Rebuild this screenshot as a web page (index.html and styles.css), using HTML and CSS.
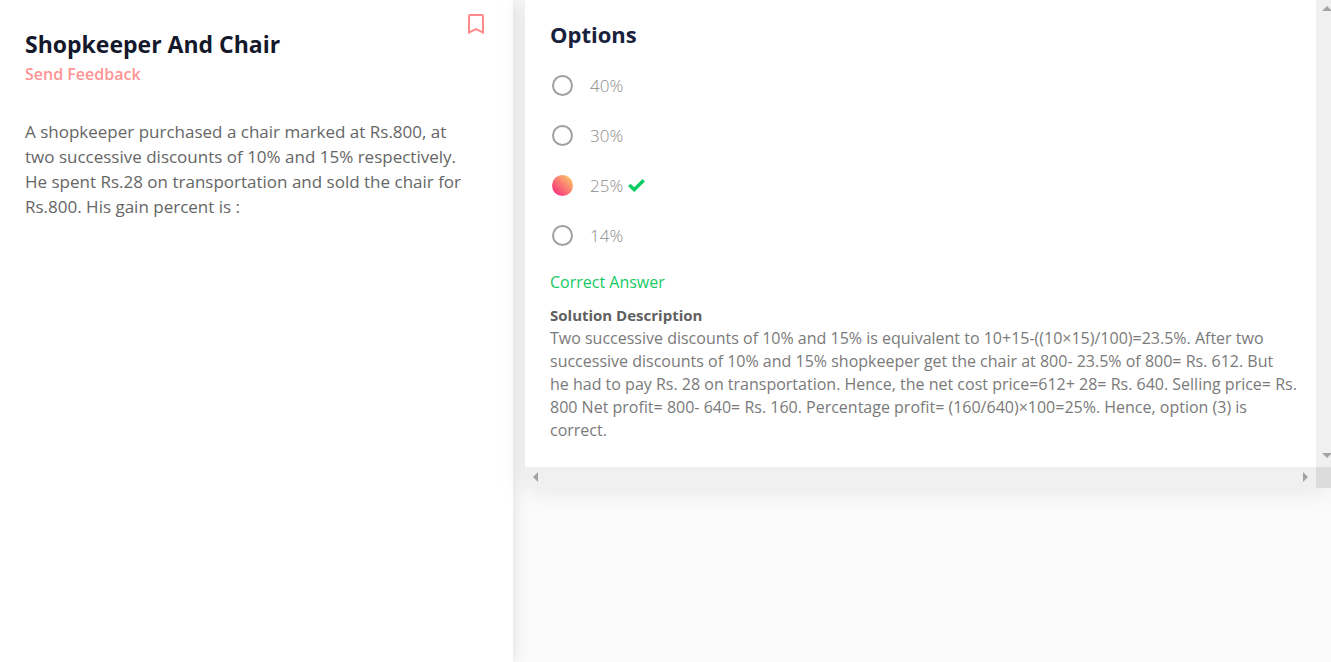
FILE: index.html
```html
<!DOCTYPE html>
<html lang="en">
<head>
<meta charset="utf-8">
<title>Shopkeeper And Chair</title>
<link rel="stylesheet" href="styles.css">
</head>
<body>
<main class="layout">
  <section class="problem">
    <header class="problem-head">
      <div>
        <h1 class="title">Shopkeeper And Chair</h1>
        <a class="feedback" href="#feedback">Send Feedback</a>
      </div>
      <button class="bookmark" type="button" aria-label="Bookmark">
        <svg width="16" height="20" viewBox="0 0 16 20" fill="none" stroke="currentColor" stroke-width="2"><path d="M1 18.5V2Q1 1 2 1H14Q15 1 15 2V18.5L8 15Z"/></svg>
      </button>
    </header>
    <p class="question">A shopkeeper purchased a chair marked at Rs.800, at<br>two successive discounts of 10% and 15% respectively.<br>He spent Rs.28 on transportation and sold the chair for<br>Rs.800. His gain percent is :</p>
  </section>
  <section class="answer">
    <div class="answer-body">
      <h2 class="heading">Options</h2>
      <form class="options">
        <label class="option"><input class="radio" type="radio" name="option"><span>40%</span></label>
        <label class="option"><input class="radio" type="radio" name="option"><span>30%</span></label>
        <label class="option"><input class="radio" type="radio" name="option" checked><span>25%</span>
          <svg class="tick" width="17" height="13" viewBox="0 0 17 13" fill="none" stroke="currentColor" stroke-width="3.4"><path d="M1.3 6L6.2 10.6L15.7 1.3"/></svg></label>
        <label class="option"><input class="radio" type="radio" name="option"><span>14%</span></label>
      </form>
      <p class="result">Correct Answer</p>
      <h3 class="subheading">Solution Description</h3>
      <p class="solution">Two successive discounts of 10% and 15% is equivalent to 10+15-((10×15)/100)=23.5%. After two<br>successive discounts of 10% and 15% shopkeeper get the chair at 800- 23.5% of 800= Rs. 612. But<br>he had to pay Rs. 28 on transportation. Hence, the net cost price=612+ 28= Rs. 640. Selling price= Rs.<br>800 Net profit= 800- 640= Rs. 160. Percentage profit= (160/640)×100=25%. Hence, option (3) is<br>correct.</p>
    </div>
    <div class="track track-y" aria-hidden="true">
      <svg width="10" height="5" viewBox="0 0 10 5"><path d="M0 5L5 0L10 5Z"/></svg>
      <svg width="10" height="5" viewBox="0 0 10 5"><path d="M0 0H10L5 5Z"/></svg>
    </div>
    <div class="track track-x" aria-hidden="true">
      <svg width="5" height="10" viewBox="0 0 5 10"><path d="M5 0V10L0 5Z"/></svg>
      <svg width="5" height="10" viewBox="0 0 5 10"><path d="M0 0V10L5 5Z"/></svg>
    </div>
    <div class="corner"></div>
  </section>
</main>
</body>
</html>
```
FILE: styles.css
```css
* { box-sizing: border-box; }
body {
  margin: 0;
  background: #fbfbfb;
  color: #666;
  font-family: "Open Sans", "Noto Sans", sans-serif;
  overflow: hidden;
}
h1, h2, h3, p { margin: 0; }
.layout {
  display: grid;
  grid-template-columns: 513fr 806fr;
  column-gap: 12px;
  align-items: start;
  min-height: 100vh;
}
.problem {
  align-self: stretch;
  padding: 14px 29px 24px 25px;
  background: #fff;
  box-shadow: 0 0 16px rgba(0, 0, 0, .12);
}
.problem-head { display: flex; justify-content: space-between; align-items: flex-start; }
.title {
  padding-top: 14px;
  font-size: 23px;
  line-height: 32px;
  font-weight: 700;
  color: #14182b;
}
.feedback {
  display: block;
  font-size: 16px;
  line-height: 28px;
  font-weight: 600;
  color: #ff9494;
  text-decoration: none;
}
.bookmark { display: flex; padding: 0; border: 0; background: none; color: #ff8c8c; }
.question {
  margin-top: 31px;
  font-size: 17px;
  line-height: 25px;
  white-space: nowrap;
}
.answer {
  display: grid;
  grid-template-columns: 1fr 15px;
  grid-template-rows: auto 21px;
  min-width: 0;
  background: #fff;
  box-shadow: 0 0 28px rgba(0, 0, 0, .1);
}
.answer-body { padding: 19px 25px 25px; min-width: 0; }
.heading { font-size: 22px; line-height: 30px; font-weight: 700; color: #18223d; }
.options { padding-top: 11px; }
.option { display: flex; align-items: center; height: 50px; font-size: 17px; font-weight: 300; color: #8c8c8c; }
.radio {
  appearance: none;
  width: 21px;
  height: 21px;
  margin: 0 17px 0 2px;
  border: 2px solid #a0a0a0;
  border-radius: 50%;
}
.radio:checked { border: 0; background: linear-gradient(45deg, #fb2f7e 10%, #fbc367 90%); }
.tick { margin-left: 5px; color: #0acb62; }
.result { font-size: 16px; line-height: 23px; padding-top: 11px; color: #15c964; }
.subheading { margin-top: 10px; font-size: 15px; line-height: 23px; font-weight: 700; color: #606060; }
.solution { font-size: 16px; line-height: 23px; color: #7a7a7a; white-space: nowrap; }
.track { display: flex; justify-content: space-between; background: #f0f0f0; fill: #a3a3a3; overflow: hidden; }
.track svg { flex: none; }
.track-y { flex-direction: column; padding: 6px 0 9px 6px; }
.track-x { padding: 5px 8px; }
.corner { background: #dcdcdc; }
```
